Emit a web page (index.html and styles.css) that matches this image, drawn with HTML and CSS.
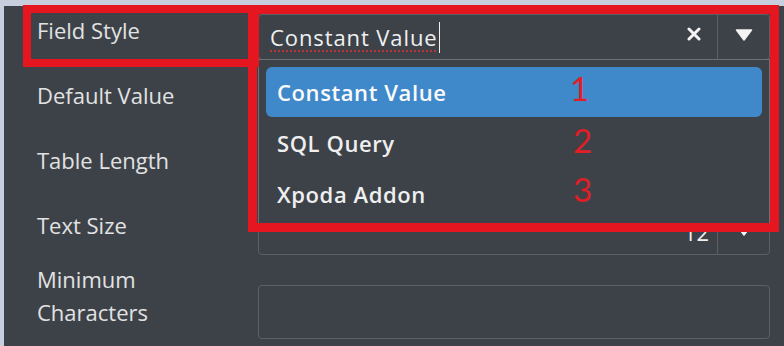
FILE: index.html
```html
<!DOCTYPE html>
<html>
<head>
<meta charset="utf-8">
<link rel="stylesheet" href="styles.css">
</head>
<body>
<div class="panel">
  <div class="row r1">
    <div class="label">Field Style</div>
    <div class="control">
      <div class="input">
        <span class="value">Constant Value</span><span class="caret"></span>
        <span class="clear"><svg width="14" height="14" viewBox="0 0 14 14"><path d="M2 2 L12 12 M12 2 L2 12" stroke="#f4f4f4" stroke-width="3" stroke-linecap="round"/></svg></span>
        <span class="arrow"><svg width="18" height="12" viewBox="0 0 18 12"><path d="M1.5 1 L16.5 1 L9 11 Z" fill="#f4f4f4" stroke="#f4f4f4" stroke-width="1.5" stroke-linejoin="round"/></svg></span>
      </div>
      <div class="menu">
        <div class="item active">Constant Value</div>
        <div class="item">SQL Query</div>
        <div class="item">Xpoda Addon</div>
      </div>
    </div>
  </div>
  <div class="row">
    <div class="label">Default Value</div>
    <div class="control"><div class="input"></div></div>
  </div>
  <div class="row">
    <div class="label">Table Length</div>
    <div class="control"><div class="input"></div></div>
  </div>
  <div class="row r4">
    <div class="label">Text Size</div>
    <div class="control">
      <div class="input">
        <span class="num">12</span>
        <span class="arrow"><svg width="18" height="12" viewBox="0 0 18 12"><path d="M1.5 1 L16.5 1 L9 11 Z" fill="#f4f4f4" stroke="#f4f4f4" stroke-width="1.5" stroke-linejoin="round"/></svg></span>
      </div>
    </div>
  </div>
  <div class="row r5">
    <div class="label">Minimum<br>Characters</div>
    <div class="control"><div class="input tall"></div></div>
  </div>
</div>
<div class="mark box-left"></div>
<div class="mark box-big"></div>
<div class="mark digit d1">1</div>
<div class="mark digit d2">2</div>
<div class="mark digit d3">3</div>
</body>
</html>
```

FILE: styles.css
```css
html, body {
  margin: 0;
  padding: 0;
}
body {
  width: 784px;
  height: 346px;
  overflow: hidden;
  position: relative;
  background: #c7cfdf;
  font-family: "Open Sans", "DejaVu Sans", sans-serif;
}
.panel {
  margin: 6px 0 0 4px;
  height: 340px;
  box-sizing: border-box;
  padding-top: 8px;
  background: #3d4249;
  overflow: hidden;
}
.row {
  display: flex;
  align-items: flex-start;
  margin-bottom: 19px;
}
.row.r4 {
  margin-bottom: 8px;
}
.label {
  width: 254px;
  box-sizing: border-box;
  padding-left: 33px;
  font-size: 22px;
  line-height: 33px;
  color: #e2e2e2;
  flex: none;
}
.control {
  width: 512px;
  position: relative;
  flex: none;
}
.r1 .control {
  z-index: 2;
}
.input {
  height: 46px;
  box-sizing: border-box;
  border: 1px solid #5b5f66;
  border-radius: 4px;
  display: flex;
  align-items: center;
  color: #f0f0f0;
  font-size: 22px;
}
.r5 .control {
  margin-top: 22px;
}
.input.tall {
  height: 54px;
}
.value {
  padding-left: 11px;
  letter-spacing: 0.9px;
  text-decoration: underline dotted #b8343a;
  text-underline-offset: 4px;
}
.caret {
  width: 1px;
  height: 31px;
  background: #f0f0f0;
  margin-left: 1px;
  margin-top: 1px;
}
.clear {
  margin-left: auto;
  display: flex;
  margin-right: 16px;
  margin-top: -6px;
}
.arrow {
  width: 52px;
  align-self: stretch;
  border-left: 1px solid #5b5f66;
  display: flex;
  align-items: center;
  justify-content: center;
  padding-bottom: 4px;
  box-sizing: border-box;
}
.num {
  margin-left: auto;
  margin-right: 8px;
}
.menu {
  position: absolute;
  left: 0;
  right: 0;
  top: 45px;
  border: 1px solid #6c7077;
  background: #3d4249;
  padding: 7px;
  height: 168px;
  box-sizing: border-box;
}
.item {
  height: 51px;
  box-sizing: border-box;
  padding-left: 11px;
  display: flex;
  align-items: center;
  font-size: 22px;
  font-weight: 600;
  letter-spacing: 0.6px;
  color: #efefef;
  border-radius: 6px;
}
.item.active {
  height: 50px;
  background: #3f89ca;
  color: #fafafa;
}
.mark {
  position: absolute;
  z-index: 5;
}
.box-left {
  left: 23px;
  top: 5px;
  width: 236px;
  height: 62px;
  border: 8px solid #e5161f;
  box-sizing: border-box;
}
.box-big {
  left: 248px;
  top: 5px;
  width: 531px;
  height: 227px;
  border: 9px solid #e5161f;
  box-sizing: border-box;
}
.digit {
  font-family: "Lato", "Liberation Sans", sans-serif;
  font-size: 33px;
  line-height: 33px;
  color: #e21d26;
}
.d1 { left: 570px; top: 72px; }
.d2 { left: 573px; top: 124px; }
.d3 { left: 573px; top: 173px; }
```
